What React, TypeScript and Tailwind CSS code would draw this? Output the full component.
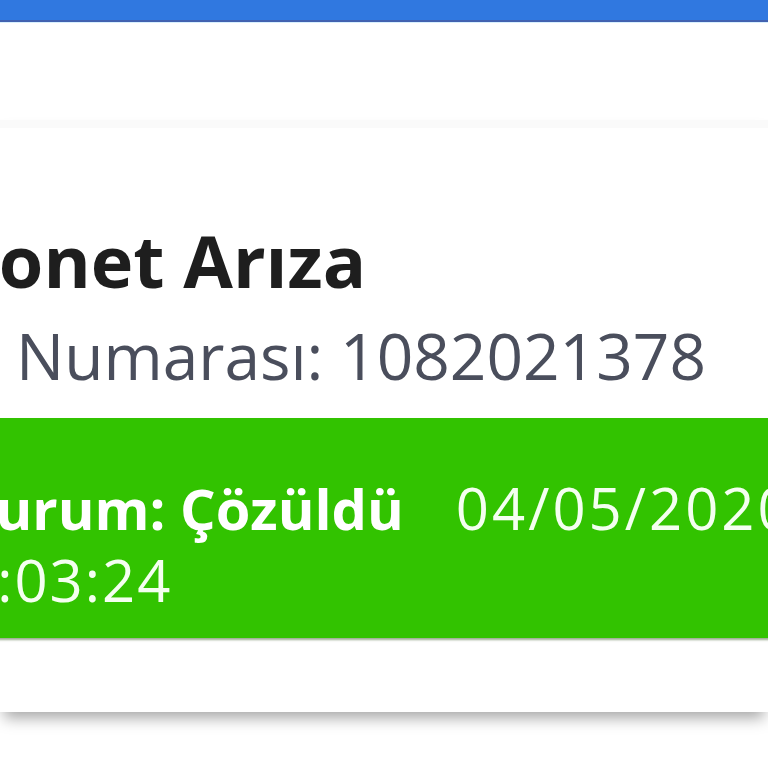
import React from "react";

/**
 * Arıza kaydı detay kartı
 */
export default function App() {
  const ticket = {
    title: "Kablonet Arıza",
    label: "Arıza Numarası:",
    number: "1082021378",
    status: "Çözüldü",
    date: "04/05/2020",
    time: "9:03:24",
  };

  return (
    <div
      className="w-[768px] h-[768px] overflow-hidden bg-white"
      style={{ fontFamily: '"Open Sans", "Noto Sans", sans-serif' }}
    >
      {/* Top bar */}
      <div className="h-[22px] bg-[#3078e0] border-b-2 border-[#4262b0]" />
      <div className="h-px bg-[#d8f0ff]" />

      {/* Card */}
      <div className="mt-[97px] bg-white border-t-[8px] border-[#fafafa] shadow-[0_10px_14px_-4px_rgba(0,0,0,0.35)]">
        <div className="-ml-[160px] w-[1200px] pt-[90px] pb-[74px]">
          <h1 className="text-[72px] leading-[84px] font-bold text-[#1e1e1e] whitespace-nowrap">
            {ticket.title}
          </h1>
          <p className="mt-[14px] pl-[11px] text-[64px] leading-[80px] text-[#4a4e5c] whitespace-nowrap">
            {ticket.label} {ticket.number}
          </p>

          {/* Status */}
          <div className="mt-[22px] bg-[#32c300] pl-[114px] pt-[54px] pb-[22px] shadow-[0_2px_2px_rgba(60,90,40,0.5)] text-[58px] leading-[72px] text-[#f4fff0] whitespace-nowrap">
            <div>
              <span className="text-[56px] font-bold text-white">Durum: {ticket.status}</span>
              <span className="ml-[52px] tracking-[3px]">{ticket.date}</span>
            </div>
            <div className="pl-[8px] tracking-[2px]">{ticket.time}</div>
          </div>
        </div>
      </div>
    </div>
  );
}
